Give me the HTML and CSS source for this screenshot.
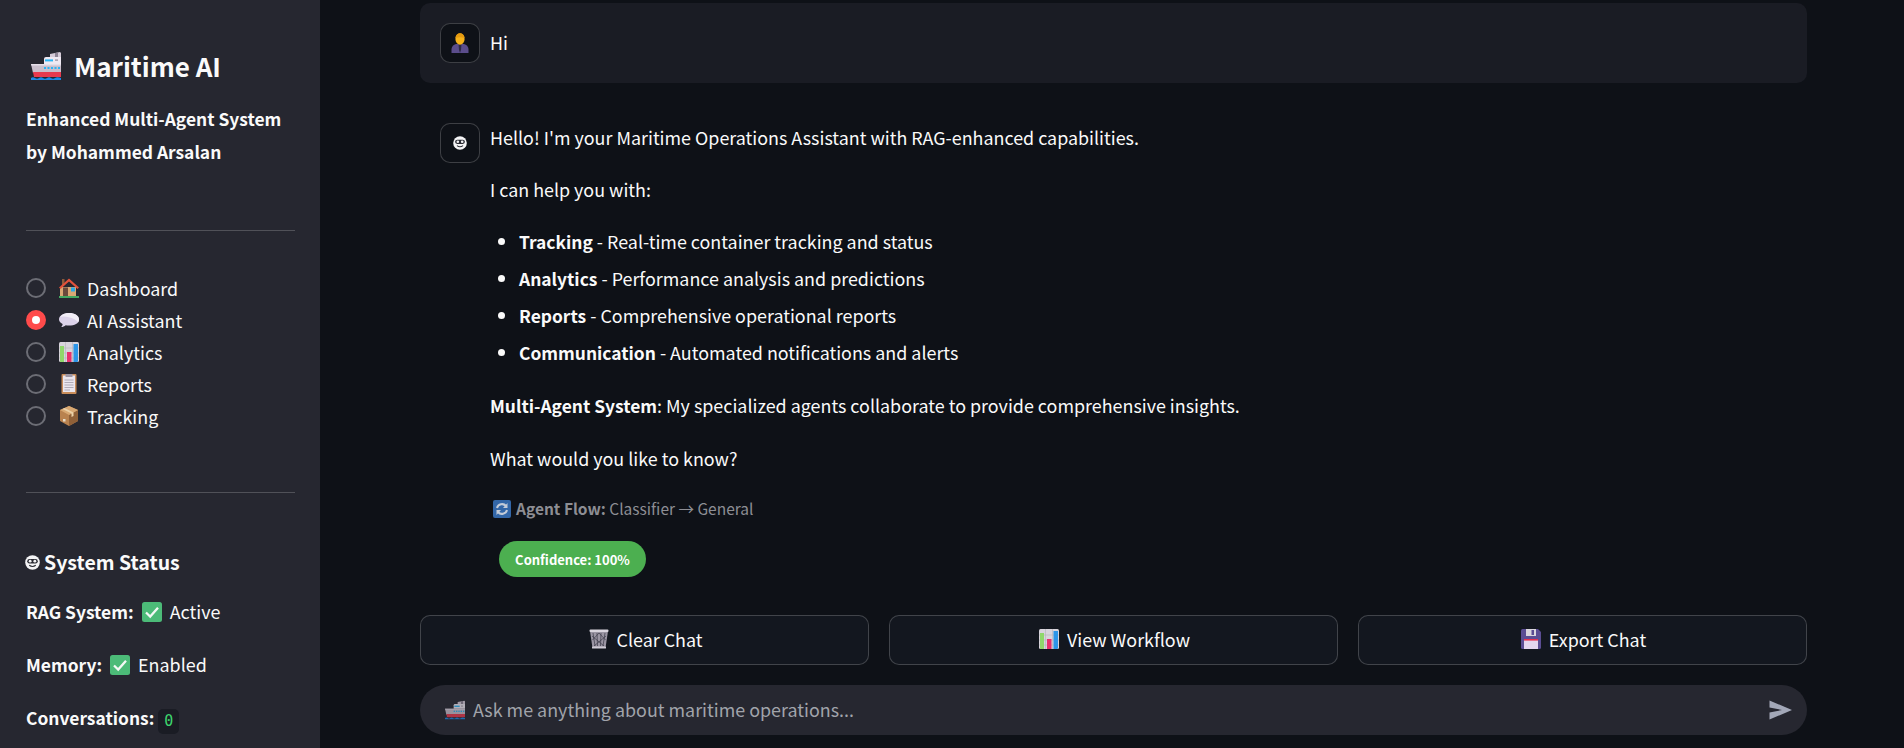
FILE: index.html
```html
<!DOCTYPE html>
<html lang="en">
<head>
<meta charset="utf-8">
<title>Maritime AI</title>
<link rel="stylesheet" href="styles.css">
</head>
<body>
<svg class="sprite" xmlns="http://www.w3.org/2000/svg" aria-hidden="true">
  <defs>
    <symbol id="ship" viewBox="0 0 30 30">
      <path d="M19 6 L19 3 L29 1 L30 2 V6z" fill="#d5cbd8"/>
      <path d="M24 2 L27 1.4 V6 H24z" fill="#8d8494"/>
      <path d="M13 13 V8 Q13 6 15 6 H30 V13z" fill="#efe9f2"/>
      <rect x="14" y="8.4" width="8" height="2" fill="#29b6f6"/>
      <rect x="24" y="8.4" width="3" height="1.4" fill="#9e97a6"/>
      <path d="M0 13 H30 V22 H2z" fill="#c9bfcc"/>
      <path d="M0 13 H30 V14.4 H0.3z" fill="#e6dfe9"/>
      <g fill="#29b6f6"><rect x="13" y="16" width="2" height="2"/><rect x="16.500" y="16" width="2" height="2"/><rect x="20" y="16" width="2" height="2"/><rect x="23.500" y="16" width="2" height="2"/><rect x="27" y="16" width="2" height="2"/></g>
      <path d="M2 21 H30 V26 H3z" fill="#e83a4e"/>
      <path d="M0 29 V27 Q2 25.500 4 27 T8 27 T12 27 T16 27 T20 27 T24 27 T30 27 V29z" fill="#1e88e5"/>
    </symbol>
    <symbol id="house" viewBox="0 0 20 20">
      <rect x="3" y="1" width="2.500" height="6" fill="#8d5a3a"/>
      <path d="M3 9 H17 V18 H1 V9z" fill="#d9a874"/>
      <path d="M0 9.500 L10 0.500 L20 9.500 L18.500 11 L10 3.500 L1.500 11z" fill="#e2523b"/>
      <rect x="4" y="9.500" width="5" height="8.500" fill="#6b4a3c"/>
      <rect x="12" y="9.500" width="4" height="4" fill="#29a9e8"/>
      <rect x="0" y="18" width="20" height="2" fill="#43a861"/>
    </symbol>
    <symbol id="bubble" viewBox="0 0 20 20">
      <path d="M10 3 C15.500 3 20 5.500 20 9.500 C20 13.500 15.500 15.500 10 15.500 C8.800 15.500 7.700 15.400 6.700 15.200 C5.500 16.200 3.800 17 2.200 17 C3.200 16 3.600 14.900 3.600 14 C1.400 12.900 0 11.300 0 9.500 C0 5.500 4.500 3 10 3z" fill="#dcd3ea"/>
      <path d="M10 3 C15.500 3 20 5.500 20 9.500 C20 10.500 19.700 11.400 19.200 12.200 C17 9.500 12 7 5 6.500 C3 6.300 1.800 6.600 1.200 7 C2.800 4.600 6 3 10 3z" fill="#f2eef7"/>
    </symbol>
    <symbol id="chart" viewBox="0 0 20 20">
      <rect width="20" height="20" rx="1.500" fill="#d8d4dc"/>
      <path d="M0 6 H20 M0 11 H20 M0 16 H20 M6.500 0 V20 M13.500 0 V20" stroke="#b6b1bb" stroke-width=".6"/>
      <path d="M1 4 H5 V20 H1.500 Q1 20 1 19z" fill="#8fd86a"/>
      <rect x="8" y="10" width="4.500" height="10" fill="#e8316c"/>
      <path d="M14.500 2 H19 V19 Q19 20 18 20 H14.500z" fill="#2c95e8"/>
    </symbol>
    <symbol id="clip" viewBox="0 0 20 20">
      <rect x="2.500" y="0" width="15" height="20" rx="1" fill="#c98d5a"/>
      <rect x="4" y="1.500" width="12" height="16.500" fill="#eae6ee"/>
      <rect x="6.500" y="0" width="7" height="3" rx=".6" fill="#9d97a5"/>
      <path d="M5.500 6 H14.500 M5.500 8.500 H14.500 M5.500 11 H14.500 M5.500 13.500 H14.500 M5.500 16 H11" stroke="#a9a4b0" stroke-width=".9"/>
    </symbol>
    <symbol id="box" viewBox="0 0 20 20">
      <path d="M10 0 L19 4 V15 L10 20 L1 15 V4z" fill="#b9824f"/>
      <path d="M10 9 L19 4 V15 L10 20z" fill="#8f6038"/>
      <path d="M10 0 L19 4 L10 9 L1 4z" fill="#d8a873"/>
      <path d="M5.500 2 L14.500 6.500 V10 L12.500 11 V7.600 L3.500 3z" fill="#ecd1a8"/>
      <rect x="4" y="13" width="2.500" height="2.500" fill="#e6dcc9"/>
    </symbol>
    <symbol id="robot" viewBox="0 0 16 16">
      <circle cx="8" cy="8" r="7.800" fill="#f4f4f6"/>
      <rect x="2.400" y="4.200" width="11.200" height="4.800" rx="2.400" fill="#2a2b33"/>
      <circle cx="5.500" cy="6.600" r="1.500" fill="#f4f4f6"/>
      <circle cx="10.500" cy="6.600" r="1.500" fill="#f4f4f6"/>
      <path d="M4.500 11 Q8 13.500 11.500 11" fill="none" stroke="#2a2b33" stroke-width="1.200"/>
    </symbol>
    <symbol id="check" viewBox="0 0 20 20">
      <rect width="20" height="20" rx="2.500" fill="#4cbb78"/>
      <path d="M4 10.500 L8.200 14.500 L16 5.800" fill="none" stroke="#f4f8f5" stroke-width="2.300"/>
    </symbol>
    <symbol id="person" viewBox="0 0 20 20">
      <path d="M1.500 20 V16 Q2 12 6 11 H14 Q18 12 18.500 16 V20z" fill="#5b4d8c"/>
      <path d="M8.500 11 H11.500 L11 17 L10 20 L9 17z" fill="#2d2a44"/>
      <ellipse cx="10" cy="6" rx="4.600" ry="5.800" fill="#f6b21a"/>
      <path d="M5.400 5 Q6 .200 10 .200 Q14 .200 14.600 5 Q10 3.400 5.400 5z" fill="#e59a10"/>
    </symbol>
    <symbol id="refresh" viewBox="0 0 18 18">
      <rect width="18" height="18" rx="2" fill="#3367a8"/>
      <path d="M4 8 A5.200 5.200 0 0 1 13 6 M14 10 A5.200 5.200 0 0 1 5 12" fill="none" stroke="#c4ccd8" stroke-width="2"/>
      <path d="M14.500 3 V8 H10z M3.500 15 V10 H8z" fill="#c4ccd8"/>
    </symbol>
    <symbol id="trash" viewBox="0 0 20 20">
      <path d="M1 2 H19 L16.500 19 H3.500z" fill="#9a95a3"/>
      <rect x="0.500" y="0.500" width="19" height="2.500" rx="1" fill="#d9d5de"/>
      <path d="M4 4 L6 17 M8 4 L8.500 17 M12 4 L11.500 17 M16 4 L14 17 M3 7 L15 17 M17 7 L5 17 M3.500 11 L10 4 M16.500 11 L10 4" stroke="#3b3a47" stroke-width=".7"/>
      <rect x="3" y="17.500" width="14" height="2" rx=".6" fill="#cfcbd5"/>
    </symbol>
    <symbol id="floppy" viewBox="0 0 20 20">
      <path d="M1.500 0 H17 L20 3 V18.500 Q20 20 18.500 20 H1.500 Q0 20 0 18.500 V1.500 Q0 0 1.500 0z" fill="#5b4d93"/>
      <rect x="5" y="0" width="10" height="7" fill="#d9d5de"/>
      <rect x="10.500" y="1" width="2.500" height="5" fill="#5b4d93"/>
      <rect x="3" y="10" width="14" height="10" fill="#e4d6ee"/>
      <rect x="3" y="10" width="14" height="1.600" fill="#e8314f"/>
    </symbol>
  </defs>
</svg>

<aside class="sidebar">
  <h1 class="brand"><svg class="emoji-lg"><use href="#ship"/></svg>Maritime AI</h1>
  <p class="tagline"><strong>Enhanced Multi-Agent System</strong><br><strong>by Mohammed Arsalan</strong></p>
  <hr class="rule rule-top">
  <ul class="nav">
    <li class="nav-item"><span class="radio"></span><svg class="emoji"><use href="#house"/></svg>Dashboard</li>
    <li class="nav-item"><span class="radio radio-on"></span><svg class="emoji"><use href="#bubble"/></svg>AI Assistant</li>
    <li class="nav-item"><span class="radio"></span><svg class="emoji"><use href="#chart"/></svg>Analytics</li>
    <li class="nav-item"><span class="radio"></span><svg class="emoji"><use href="#clip"/></svg>Reports</li>
    <li class="nav-item"><span class="radio"></span><svg class="emoji"><use href="#box"/></svg>Tracking</li>
  </ul>
  <hr class="rule rule-bottom">
  <h3 class="status-title"><svg class="robot-sm"><use href="#robot"/></svg>System Status</h3>
  <p class="status"><strong>RAG System:</strong> <svg class="emoji-inline"><use href="#check"/></svg>Active</p>
  <p class="status"><strong>Memory:</strong> <svg class="emoji-inline"><use href="#check"/></svg>Enabled</p>
  <p class="status"><strong>Conversations:</strong> <code class="count">0</code></p>
</aside>

<main class="main">
  <section class="msg msg-user">
    <span class="avatar"><svg class="avatar-icon"><use href="#person"/></svg></span>
    <div class="msg-body msg-body-user">Hi</div>
  </section>
  <section class="msg msg-bot">
    <span class="avatar"><svg class="avatar-bot"><use href="#robot"/></svg></span>
    <div class="msg-body">
      <p>Hello! I'm your Maritime Operations Assistant with RAG-enhanced capabilities.</p>
      <p>I can help you with:</p>
      <ul class="features">
        <li><strong>Tracking</strong> - Real-time container tracking and status</li>
        <li><strong>Analytics</strong> - Performance analysis and predictions</li>
        <li><strong>Reports</strong> - Comprehensive operational reports</li>
        <li><strong>Communication</strong> - Automated notifications and alerts</li>
      </ul>
      <p><strong>Multi-Agent System</strong>: My specialized agents collaborate to provide comprehensive insights.</p>
      <p>What would you like to know?</p>
      <p class="flow"><svg class="flow-icon"><use href="#refresh"/></svg><strong>Agent Flow:</strong> Classifier → General</p>
      <span class="pill">Confidence: 100%</span>
    </div>
  </section>
  <div class="actions">
    <button class="btn"><svg class="emoji-btn"><use href="#trash"/></svg>Clear Chat</button>
    <button class="btn"><svg class="emoji-btn"><use href="#chart"/></svg>View Workflow</button>
    <button class="btn"><svg class="emoji-btn"><use href="#floppy"/></svg>Export Chat</button>
  </div>
  <div class="input">
    <svg class="emoji-ph"><use href="#ship"/></svg>
    <span class="placeholder">Ask me anything about maritime operations...</span>
    <svg class="send" viewBox="0 0 24 24"><path d="M1.500 21.500 L24 12 L1.500 2.500 L1.500 9.500 L14 12 L1.500 14.500z" fill="#a3a8b8"/></svg>
  </div>
</main>
</body>
</html>
```
FILE: styles.css
```css
* { box-sizing: border-box; }
html, body { margin: 0; height: 748px; overflow: hidden; }
body {
  display: flex;
  background: #0e1117;
  color: #fafafa;
  font-family: "Noto Sans CJK JP", "Noto Sans", sans-serif;
  font-size: 17.900px;
  line-height: 32px;
}
.sprite { position: absolute; width: 0; height: 0; }
strong { font-weight: 600; font-size: 17.400px; }
p { margin: 0; }

.sidebar {
  flex: 0 0 320px;
  height: 748px;
  background: #262730;
  padding: 45px 25px 0 26px;
  overflow: hidden;
}
.brand {
  display: flex;
  align-items: center;
  margin: 0 0 15px;
  height: 42px;
  font-size: 26px;
  font-weight: 600;
  line-height: 42px;
  padding-left: 5px;
}
.emoji-lg { width: 30px; height: 30px; margin-right: 13px; }
.tagline { margin: 0; }
.rule { border: 0; height: 1px; margin: 0; background: rgba(250, 250, 250, .2); }
.rule-top { margin-top: 62px; }
.rule-bottom { margin-top: 60px; }
.nav { list-style: none; margin: 41px 0 0; padding: 0; }
.nav-item { display: flex; align-items: center; height: 32px; }
.radio {
  width: 20px; height: 20px; border-radius: 50%;
  border: 2px solid #6c6d75;
  margin-right: 13px;
  flex: none;
  display: flex; align-items: center; justify-content: center;
}
.radio-on { background: #ff4b4b; border-color: #ff4b4b; }
.radio-on::after { content: ""; width: 8px; height: 8px; background: #fff; border-radius: 50%; }
.emoji { width: 20px; height: 20px; margin-right: 8px; flex: none; }
.status-title {
  display: flex; align-items: center;
  margin: 51px 0 0;
  font-size: 19.500px;
  font-weight: 600;
  line-height: 36px;
}
.robot-sm { width: 15px; height: 15px; margin: 0 4px 0 -1px; }
.status { margin-top: 15px; }
.status + .status { margin-top: 20px; }
.emoji-inline { width: 20px; height: 20px; vertical-align: -3px; margin: 0 8px 0 4px; }
.count {
  display: inline-block;
  width: 21px; height: 25px;
  font-family: "DejaVu Sans Mono", monospace;
  font-size: 15px;
  line-height: 25px;
  text-align: center;
  color: #3dd56d;
  background: #1a1c24;
  border-radius: 5px;
  vertical-align: -1px;
}

.main { flex: 1; padding: 3px 97px 0 100px; min-width: 0; }
.msg { display: flex; padding: 20px; border-radius: 10px; }
.msg-user { background: #1a1c24; height: 80px; margin-bottom: 20px; }
.avatar {
  flex: none; width: 40px; height: 40px; margin-right: 10px;
  border: 1px solid rgba(250, 250, 250, .2);
  border-radius: 10px;
  background: #0e1117;
  display: flex; align-items: center; justify-content: center;
}
.avatar-icon { width: 20px; height: 20px; }
.avatar-bot { width: 14px; height: 14px; }
.msg-body { margin-top: -2px; flex: 1; min-width: 0; }
.msg-body-user { margin-top: 3px; }
.msg-bot { height: 483px; padding-bottom: 0; }
.msg-body p { margin-bottom: 20px; }
.features { margin: 0 0 20px; padding: 0 0 0 29px; }
.features li { margin: 4px 0; }
.features li:first-child { margin-top: 0; }
.msg-body .flow {
  margin: 3px 0 0;
  font-size: 15.500px;
  line-height: 28px;
  color: #8d8e94;
}
.flow strong { font-size: 15.500px; }
.flow-icon { width: 18px; height: 18px; vertical-align: -3px; margin: 0 5px 0 3px; }
.pill {
  display: block;
  width: 147px; height: 36px;
  margin: 19px 0 0 9px;
  background: #4caf50;
  border-radius: 18px;
  text-align: center;
  font-size: 13px;
  font-weight: 700;
  line-height: 38px;
  color: #fff;
}

.actions { display: flex; gap: 20px; margin-top: 29px; }
.btn {
  flex: 1;
  height: 50px;
  padding: 0 0 2px 2px;
  background: #13171f;
  border: 1px solid rgba(250, 250, 250, .2);
  border-radius: 10px;
  color: #fafafa;
  font: inherit;
  display: flex; align-items: center; justify-content: center;
}
.emoji-btn { width: 20px; height: 20px; margin-right: 8px; }
.input {
  display: flex; align-items: center;
  height: 50px;
  margin-top: 20px;
  padding: 0 15px 0 25px;
  background: #262730;
  border-radius: 25px;
}
.emoji-ph { width: 20px; height: 20px; margin-right: 8px; opacity: .7; }
.placeholder { flex: 1; color: #a1a4ab; margin-top: -3px; }
.send { width: 24px; height: 24px; }
```
